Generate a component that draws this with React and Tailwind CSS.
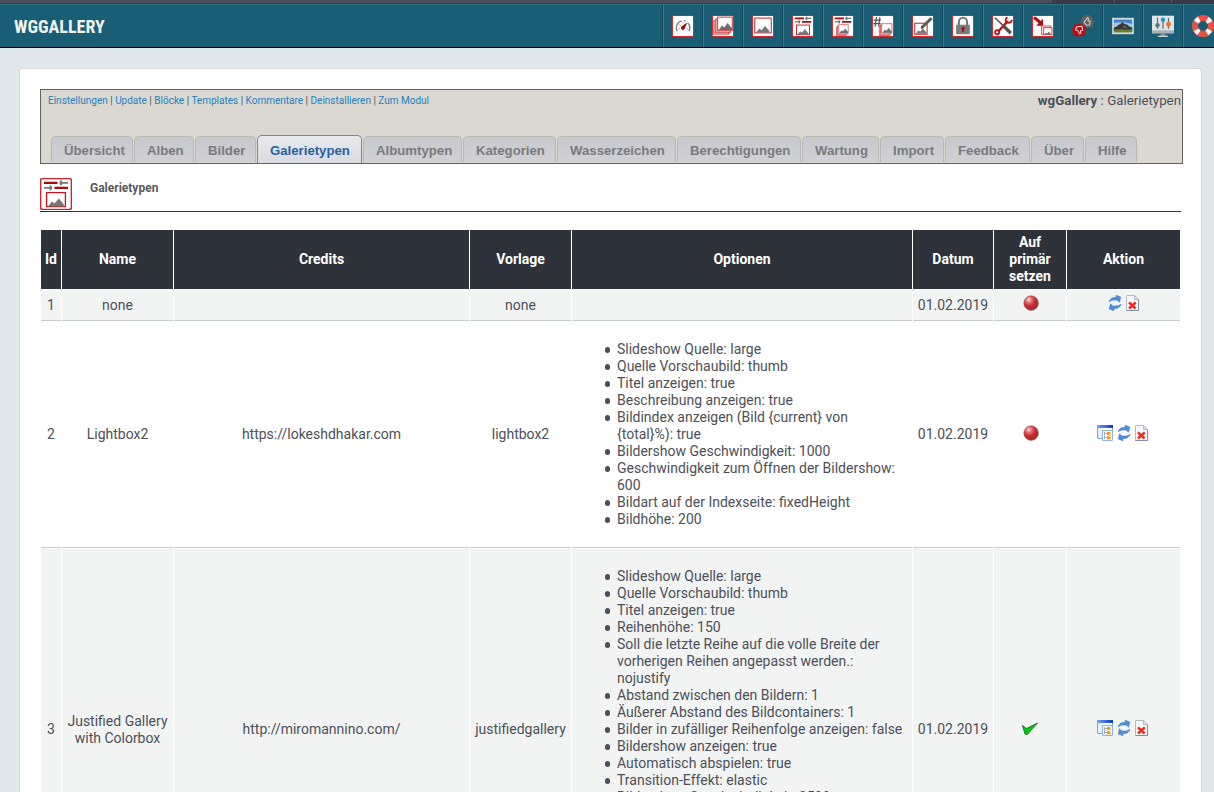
import React from "react";

const Frame = ({ children }) => (
  <>
    <rect x="0.6" y="0.6" width="30.8" height="30.8" rx="1.8" fill="#fff" stroke="#d6252a" strokeWidth="1.5" />
    {children}
  </>
);

const Mountains = ({ x = 0, y = 0, s = 1 }) => (
  <path transform={`translate(${x} ${y}) scale(${s})`} d="M0 8 4 3l2.5 2L11 0l5 6v2z" fill="#777" />
);

const Sliders = () => (
  <>
    <path d="M4 4.9h13.5M14.5 9.9H28" stroke="#a30d10" strokeWidth="2.4" />
    <path d="M19.5 4.9H28M4 9.9h8" stroke="#777" strokeWidth="1.8" />
    <path d="M21 2.6v4.6M10.5 7.6v4.6" stroke="#777" strokeWidth="2.2" />
  </>
);

const Stack = ({ x, y, s }) => (
  <g transform={`translate(${x} ${y}) scale(${s})`} stroke="#d0474a" strokeWidth="1.5" fill="#f6dcdc">
    <rect x="0" y="6" width="20" height="18" />
    <rect x="2.5" y="3.5" width="20" height="18" />
    <rect x="5" y="1" width="20" height="18" fill="#fff" />
    <path d="M6.500 18.500l4.500-6 3 2.500 4.500-6 6 7v2.500z" fill="#6e6e6e" stroke="none" />
  </g>
);

const drawings = {
  dashboard: (
    <Frame>
      <path d="M7.5 23.5A10.5 10.5 0 0 1 14 8.4M17.5 8.2l2 .5M23 11.5a10.5 10.5 0 0 1 1.5 12" fill="none" stroke="#777" strokeWidth="1.9" />
      <path d="M9.5 20h2M10.5 14l2 1.5M16 10.5V12M21.5 20h2" stroke="#888" strokeWidth="1.3" />
      <path d="M22.5 10.5 18.5 19.500a2.800 2.800 0 1 1-4.500-2.800z" fill="#a00b0e" />
    </Frame>
  ),
  albums: <Frame><Stack x={2.8} y={2} s={1.07} /></Frame>,
  images: (
    <Frame>
      <rect x="4" y="4.500" width="24" height="21.500" fill="#fff" stroke="#cf3236" strokeWidth="1.6" />
      <Mountains x={6} y={16} s={1.2} />
    </Frame>
  ),
  galleryTypes: (
    <Frame>
      <Sliders />
      <rect x="6.6" y="14.6" width="18.8" height="14" fill="#fff" stroke="#c2181d" strokeWidth="1.3" />
      <Mountains x={8} y={20.5} s={0.99} />
    </Frame>
  ),
  albumTypes: <Frame><Sliders /><Stack x={6.5} y={13.5} s={0.68} /></Frame>,
  watermark: (
    <Frame>
      <path d="M6.5 3 4.5 17M11.5 3l-2 14M2.5 7.5H13M2 12.5h10.5" stroke="#555" strokeWidth="1.8" />
      <Stack x={10.5} y={12} s={0.74} />
    </Frame>
  ),
  edit: (
    <Frame>
      <rect x="4" y="12" width="18" height="16" fill="#fff" stroke="#c2181d" strokeWidth="1.4" />
      <Mountains x={5.5} y={19.5} s={0.95} />
      <path d="m13 20 1.5-5L27 3l3 3-12.5 12z" fill="#606060" />
      <path d="m13 20 1.2-4 3 2.8z" fill="#333" />
    </Frame>
  ),
  lock: (
    <Frame>
      <path d="M10 15v-5a6 6 0 0 1 12 0v5" fill="none" stroke="#777" strokeWidth="3" />
      <rect x="6" y="14" width="20" height="14" rx="1.5" fill="#7a7a7a" />
      <circle cx="16" cy="19.5" r="2.4" fill="#b30c10" />
      <path d="M14.8 20h2.4v5h-2.4z" fill="#b30c10" />
    </Frame>
  ),
  tools: (
    <Frame>
      <path d="M9 24 23 9" stroke="#bd1116" strokeWidth="3.6" />
      <circle cx="7.5" cy="25" r="3" fill="none" stroke="#bd1116" strokeWidth="2.6" />
      <path d="M22.5 3.5c-4 2-3 7 0 7.5s6 0 6.500-4" fill="none" stroke="#bd1116" strokeWidth="2.8" />
      <path d="m4 4 14 13" stroke="#555" strokeWidth="2.4" />
      <path d="m17 16.500 10.500 10" stroke="#555" strokeWidth="5" />
    </Frame>
  ),
  import: (
    <Frame>
      <path d="M3 3.500 12 11" stroke="#b30c10" strokeWidth="4.500" />
      <path d="M16 5.500V15.500H6z" fill="#b30c10" />
      <path d="M14 16h13v3M14 16v12h3" fill="none" stroke="#d35155" strokeWidth="1.5" />
      <rect x="17" y="18.500" width="12" height="10" fill="#fff" stroke="#c2282c" strokeWidth="1.3" />
      <Mountains x={18} y={24} s={0.6} />
    </Frame>
  ),
  feedback: (
    <>
      <circle cx="22" cy="9.500" r="9.500" fill="#5d5f61" />
      <path d="m28 14 3.500 4.500-7-.5z" fill="#5d5f61" />
      <path d="M17.500 10.500 22.500 4l1.500 1-.8 3.500 3.300.500-1 5.500-4.500.3z" fill="none" stroke="#d3d6d7" strokeWidth="1.5" />
      <ellipse cx="10.500" cy="22" rx="10.200" ry="9.300" fill="#b80f14" />
      <path d="m3 26-2.500 5 7-1z" fill="#b80f14" />
      <path d="M6.500 17.500l8-1 1 5.500-3 .8.300 4-2 .5-2-4.300-3.500-1.500z" fill="none" stroke="#f2d5d6" strokeWidth="1.5" />
    </>
  ),
  photo: (
    <>
      <rect x="0.500" y="4.500" width="31" height="23" fill="#f1f3f4" stroke="#c4c8ca" />
      <path d="M2.500 6.500h27v11h-27z" fill="#4484cd" />
      <path d="M2.500 12c8-3 17-1 27 1v7h-27z" fill="#a4c6e6" />
      <path d="m2.500 18 4-1 3-3 3-1 2-3 4 3 4 1 3 3 4 1v5h-27z" fill="#373737" />
      <path d="m14 18 4-3 3 2 2 2z" fill="#6c6058" />
      <path d="M2.500 21h27v4.500h-27z" fill="#617f36" />
    </>
  ),
  settings: (
    <>
      <path d="M0 1h32v22H0z" fill="#dfe4e6" />
      <path d="M0 23h32v4H0z" fill="#a9b3b8" />
      <path d="M13 27h6l1 3H12z" fill="#89949b" />
      <path d="M9 30h14v2H9z" fill="#cbd1d4" />
      <path d="M8 4v16M16 4v16M24 4v16" stroke="#5e7481" strokeWidth="1.8" />
      <circle cx="8" cy="15" r="3.200" fill="#607985" />
      <circle cx="16" cy="7" r="3.200" fill="#249bc5" />
      <circle cx="24" cy="13.500" r="3.600" fill="#ff6b29" />
    </>
  ),
  help: (
    <>
      <circle cx="16" cy="16" r="11.500" fill="none" stroke="#e85144" strokeWidth="8.500" />
      <circle cx="16" cy="16" r="11.500" fill="none" stroke="#fff" strokeWidth="8.500" strokeDasharray="6 12.064" strokeDashoffset="-6.032" />
      <circle cx="16" cy="16" r="15.500" fill="none" stroke="#c7655e" strokeWidth="1" />
    </>
  ),
};

const Icon = ({ name, className }) => (
  <svg viewBox="0 0 32 32" className={className}>{drawings[name]}</svg>
);

const navIcons = ["dashboard", "albums", "images", "galleryTypes", "albumTypes", "watermark", "edit", "lock", "tools", "import", "feedback", "photo", "settings", "help"];

const RedBall = () => (
  <svg viewBox="0 0 16 16" className="ml-px size-4">
    <defs>
      <radialGradient id="ball" cx="35%" cy="27%" r="72%">
        <stop offset="0" stopColor="#ffe0e0" />
        <stop offset=".25" stopColor="#e07a7c" />
        <stop offset=".6" stopColor="#cb2b30" />
        <stop offset="1" stopColor="#a52a2e" />
      </radialGradient>
    </defs>
    <circle cx="8.500" cy="8.600" r="7.200" fill="#6b6b6b" opacity=".55" />
    <circle cx="8" cy="8" r="7.200" fill="url(#ball)" stroke="#9c3438" strokeWidth=".5" />
  </svg>
);

const Check = () => (
  <svg viewBox="0 0 16 16" className="size-4">
    <path d="M.5 5.500 4.500 8.500 15.500 3 5 14.800 3 14z" fill="#04c90b" stroke="#14751a" strokeWidth=".9" strokeLinejoin="round" />
  </svg>
);

const Options = () => (
  <svg viewBox="0 0 16 16" className="mr-[3px] size-4">
    <defs>
      <linearGradient id="titlebar"><stop stopColor="#75a9ef" /><stop offset="1" stopColor="#0b38d3" /></linearGradient>
    </defs>
    <path d="M.5.5h15v13H.5z" fill="#fff" stroke="#78a6dc" />
    <path d="M0 0h16v3H0z" fill="url(#titlebar)" />
    <path d="M1 3h4v10H1z" fill="#e6f0fb" />
    <path d="M5.500 5.500h10v10h-10z" fill="#f4f8fc" stroke="#8fb4de" />
    <path d="M7.500 7v7M7.500 8.500H10M7.500 12.500H10" stroke="#a3afbb" fill="none" />
    <path d="M10 7h3.500v3H10zM10 11.200h3.500v3H10z" fill="#ff9616" />
  </svg>
);

const Refresh = () => (
  <svg viewBox="0 0 16 16" className="size-4">
    <g fill="#4c8fe0" stroke="#3a6cb4" strokeWidth=".5" strokeLinejoin="round">
      <path d="M2 6.800C3 3.300 6 2 9.200 2.500L9 .3 13.800 2 12.500 7.200 10.500 5.300C7 4.500 4.500 5 2 6.800z" />
      <path d="M14 9.200c-1 3.500-4 4.800-7.200 4.300l.2 2.200L2.200 14 3.500 8.800l2 1.900c3.500.8 6 .3 8.500-1.500z" />
    </g>
  </svg>
);

const Delete = () => (
  <svg viewBox="0 0 16 16" className="ml-[2px] size-4">
    <path d="M1.500.5h8l4 4v11h-12z" fill="#f8f9fc" stroke="#b5bac8" />
    <path d="M13.500 4.500v11h-12" fill="none" stroke="#858ca3" />
    <path d="M9.500.5v4h4z" fill="#dde1ed" stroke="#b5bac8" />
    <path d="m4 7.300 6.500 6.200M10.800 7.300l-6.800 6.200" stroke="#f12a1b" strokeWidth="2.500" />
  </svg>
);

const links = ["Einstellungen", "Update", "Blöcke", "Templates", "Kommentare", "Deinstallieren", "Zum Modul"];

const tabs = [
  ["Übersicht", "w-[82px]"], ["Alben", "w-[60px]"], ["Bilder", "w-[61px]"], ["Galerietypen", "w-[105px]"],
  ["Albumtypen", "w-[99px]"], ["Kategorien", "w-[93px]"], ["Wasserzeichen", "w-[119px]"],
  ["Berechtigungen", "w-[124px]"], ["Wartung", "w-[77px]"], ["Import", "w-[64px]"],
  ["Feedback", "w-[85px]"], ["Über", "w-[53px]"], ["Hilfe", "w-[52px]"],
];

const columns = ["Id", "Name", "Credits", "Vorlage", "Optionen", "Datum", "Auf primär setzen", "Aktion"];

const rows = [
  { id: 1, name: "none", credits: "", template: "none", options: [], primary: false, height: "h-[31px]", bg: "bg-[#f2f4f4]" },
  {
    id: 2, name: "Lightbox2", credits: "https://lokeshdhakar.com", template: "lightbox2", primary: false, height: "h-[226px]", bg: "bg-white",
    options: ["Slideshow Quelle: large", "Quelle Vorschaubild: thumb", "Titel anzeigen: true", "Beschreibung anzeigen: true", "Bildindex anzeigen (Bild {current} von {total}%): true", "Bildershow Geschwindigkeit: 1000", "Geschwindigkeit zum Öffnen der Bildershow: 600", "Bildart auf der Indexseite: fixedHeight", "Bildhöhe: 200"],
  },
  {
    id: 3, name: "Justified Gallery with Colorbox", credits: "http://miromannino.com/", template: "justifiedgallery", primary: true, height: "h-[362px]", bg: "bg-[#f2f4f4]",
    options: ["Slideshow Quelle: large", "Quelle Vorschaubild: thumb", "Titel anzeigen: true", "Reihenhöhe: 150", "Soll die letzte Reihe auf die volle Breite der vorherigen Reihen angepasst werden.: nojustify", "Abstand zwischen den Bildern: 1", "Äußerer Abstand des Bildcontainers: 1", "Bilder in zufälliger Reihenfolge anzeigen: false", "Bildershow anzeigen: true", "Automatisch abspielen: true", "Transition-Effekt: elastic", "Bildershow Geschwindigkeit: 3500"],
  },
];

const gridCols = "grid grid-cols-[20px_111px_295px_101px_340px_80px_72px_113px] gap-x-px";

function Row({ row }) {
  const cell = `flex items-center justify-center border-b border-[#c9cccc] text-center ${row.bg}`;
  return (
    <div className={`${gridCols} ${row.height} shrink-0`}>
      <div className={cell}>{row.id}</div>
      <div className={`${cell} px-[5px]`}>{row.name}</div>
      <div className={cell}>{row.credits}</div>
      <div className={cell}>{row.template}</div>
      <div className={`${row.options.length > 9 ? "items-start pt-[19px]" : "items-center"} flex border-b border-[#c9cccc] pr-[5px] ${row.bg}`}>
        <ul className="pl-[45px]">
          {row.options.map((o) => (
            <li
              key={o}
              className="before:mr-[7px] before:-ml-[12.500px] before:inline-block before:size-[5.500px] before:rounded-full before:bg-[#4d4f58] before:align-[1.500px] before:content-['']"
            >
              {o}
            </li>
          ))}
        </ul>
      </div>
      <div className={cell}>{"01.02.2019"}</div>
      <div className={`${cell} pb-[4px]`}>{row.primary ? <Check /> : <RedBall />}</div>
      <div className={`${cell} pb-[4px]`}>
        {row.options.length > 0 && <Options />}
        <Refresh />
        <Delete />
      </div>
    </div>
  );
}

export default function App() {
  return (
    <div className="flex h-[792px] w-[1214px] flex-col overflow-hidden bg-[#e0e8eb] font-['Roboto',sans-serif] text-[14px] leading-[17px] text-[#4d4f58]">
      <div className="flex h-[4px] shrink-0 border-b border-[#363a43] bg-[#4a4e59]">
        <div className="ml-[1052px] w-[63px] border-r border-[#555963] bg-[#393c47]" />
        <div className="w-[57px] border-r border-[#555963] bg-[#393c47]" />
        <div className="flex-1 bg-[#393c47]" />
      </div>
      <header className="flex h-[44px] shrink-0 justify-between border-t border-b border-t-[#2c7187] border-b-black bg-[#195e74]">
        <h1 className="pt-[12px] pl-[14px] font-['Roboto_Condensed','Roboto',sans-serif] text-[18px] leading-[20px] font-bold text-[#f2f2ee]">
          WGGALLERY
        </h1>
        <nav className="flex w-[552px] overflow-hidden border-l border-[#0e4557]">
          {navIcons.map((n) => (
            <span key={n} className="flex w-[40px] shrink-0 justify-center border-r border-l border-r-[#0e4557] border-l-[#3b7b8e] pt-[10px]">
              <Icon name={n} className="size-[22px] shrink-0" />
            </span>
          ))}
        </nav>
      </header>

      <main className="mt-[20px] ml-[19px] flex w-[1183px] flex-1 flex-col overflow-hidden rounded-t-[4px] border border-b-0 border-[#d5dadc] bg-white pt-[20px] pl-[20px]">
        <section className="flex h-[75px] w-[1143px] shrink-0 flex-col justify-between border border-[#626262] bg-[#dbd8d1]">
          <div className="flex justify-between pt-[2px] pr-[1px] pl-[7px]">
            <p className="text-[10px]">
              {links.map((l, i) => (
                <React.Fragment key={l}>
                  {i > 0 && " | "}
                  <a className="text-[#2681bd]">{l}</a>
                </React.Fragment>
              ))}
            </p>
            <p className="text-[13.300px]"><b>wgGallery</b> : Galerietypen</p>
          </div>
          <ul className="flex items-end gap-px pl-[10px] font-['Liberation_Sans',sans-serif] text-[13.2px] font-bold text-[#797a7f]">
            {tabs.map(([label, width]) => (
              <li
                key={label}
                className={`${width} rounded-t-[5px] border border-b-0 pt-[5px] pl-[12px] text-left whitespace-nowrap ${
                  label === "Galerietypen"
                    ? "h-[28px] border-[#858585] bg-linear-to-b from-[#e9eaed] to-[#dadbe0] pt-[6px] text-[#2562a3]"
                    : "mb-px h-[26px] border-[#b9b8b5] bg-linear-to-b from-[#c8c9cd] to-[#d0d1d5]"
                }`}
              >
                {label}
              </li>
            ))}
          </ul>
        </section>

        <div className="mt-[14px] flex h-[34px] w-[1141px] shrink-0 border-b border-[#333]">
          <Icon name="galleryTypes" className="size-8" />
          <h2 className="pt-[2px] pl-[18px] text-[12px] font-bold text-[#5a5a5a]">Galerietypen</h2>
        </div>

        <div className="mt-[18px] ml-px flex w-[1139px] flex-1 flex-col gap-px">
          <div className={`${gridCols} h-[59px] shrink-0`}>
            {columns.map((c) => (
              <div key={c} className="flex items-center justify-center bg-[#2e323b] px-px text-center font-bold text-white">
                {c === "Auf primär setzen" ? <span className="w-[50px]">{c}</span> : c}
              </div>
            ))}
          </div>
          {rows.map((r) => <Row key={r.id} row={r} />)}
        </div>
      </main>
    </div>
  );
}
